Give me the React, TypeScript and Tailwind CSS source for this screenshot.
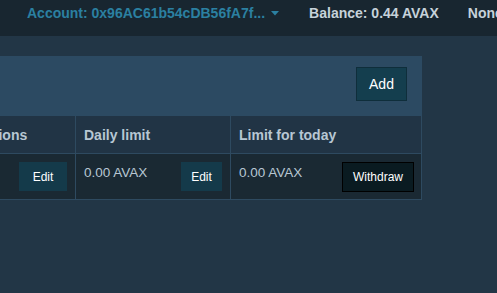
import React from 'react';

const columns = [
  { title: 'Permissions', value: '0', button: 'Edit', width: 'w-[140px]', btn: 'w-12' },
  { title: 'Daily limit', value: '0.00 AVAX', button: 'Edit', width: 'w-[155px]', btn: 'w-[41px]' },
];

function Header() {
  return (
    <header className="h-9 bg-[#182630] flex items-start pt-[3px] pl-[27px] text-sm font-bold leading-5 whitespace-nowrap">
      <span className="flex items-center text-[#2b80a1]">
        Account: 0x96AC61b54cDB56fA7f...
        <svg className="ml-[6px] mt-[1px]" width="8" height="5" viewBox="0 0 8 5">
          <path d="M0 0 L8 0 L4 4.5 Z" fill="#2b80a1" />
        </svg>
      </span>
      <span className="ml-[30px] text-[#c6d2da]">Balance: 0.44 AVAX</span>
      <span className="ml-[29px] text-[#c6d2da]">None</span>
    </header>
  );
}

function Wallet() {
  return (
    <div className="-ml-[64px] w-[486px]">
      <div className="h-[60px] bg-[#2c4a62] flex justify-end items-start pt-[11px] pr-[15px]">
        <button className="w-[51px] h-[34px] bg-[#143e4e] border border-[#0f2e3b] text-white text-sm">
          Add
        </button>
      </div>
      <div className="flex">
        {columns.map((c) => (
          <div key={c.title} className={`${c.width} border-r border-[#2e4a60]`}>
            <div className="h-[38px] bg-[#213445] border-b border-[#2e4a60] flex items-center px-2 text-sm font-bold text-[#b7c7d3]">
              {c.title}
            </div>
            <div className="h-[46px] bg-[#1a2933] border-b border-[#2e4a60] flex justify-between items-start pt-2 pl-2 pr-2">
              <span className="text-[13.5px] leading-5 pt-px text-[#b7c7d3]">{c.value}</span>
              <button className={`${c.btn} h-[29px] bg-[#143a4a] text-white text-xs`}>{c.button}</button>
            </div>
          </div>
        ))}
        <div className="w-[191px] border-r border-[#2e4a60]">
          <div className="h-[38px] bg-[#213445] border-b border-[#2e4a60] flex items-center px-2 text-sm font-bold text-[#b7c7d3]">
            Limit for today
          </div>
          <div className="h-[46px] bg-[#1a2933] border-b border-[#2e4a60] flex justify-between items-start pt-2 pl-2 pr-[7px]">
            <span className="text-[13.5px] leading-5 pt-px text-[#b7c7d3]">0.00 AVAX</span>
            <button className="w-[72px] h-[30px] bg-[#0a1b21] border border-black text-white text-xs">
              Withdraw
            </button>
          </div>
        </div>
      </div>
    </div>
  );
}

export default function App() {
  return (
    <div className="w-[497px] h-[293px] overflow-hidden bg-[#223646] font-['Liberation_Sans',Arial,sans-serif]">
      <Header />
      <main className="pt-5">
        <Wallet />
      </main>
    </div>
  );
}
